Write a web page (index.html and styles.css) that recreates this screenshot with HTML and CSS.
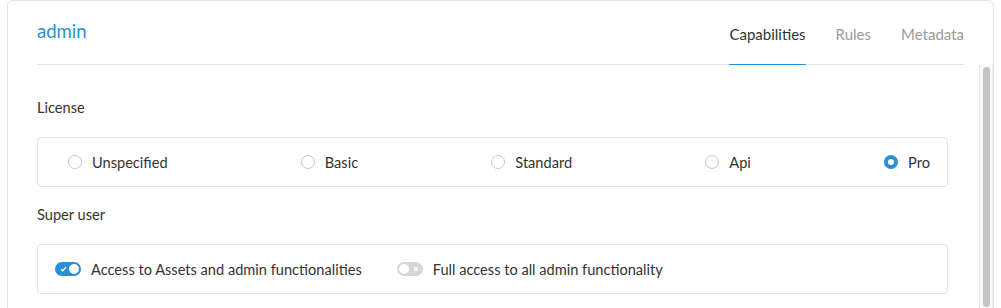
FILE: index.html
```html
<!DOCTYPE html>
<html lang="en">
<head>
    <meta charset="UTF-8">
    <title>admin</title>
    <link rel="stylesheet" href="styles.css">
</head>
<body>

    <div class="card">
        <!-- Header with tabs -->
        <div class="card-header">
            <div class="title">admin</div>
            <div class="tabs">
                <span class="tab active">Capabilities</span>
                <span class="tab">Rules</span>
                <span class="tab">Metadata</span>
            </div>
        </div>

        <div class="card-main">
            <div class="card-body">
                <div class="section-label">License</div>
                <div class="option-box radios">
                    <label class="radio"><span class="dot"></span>Unspecified</label>
                    <label class="radio"><span class="dot"></span>Basic</label>
                    <label class="radio"><span class="dot"></span>Standard</label>
                    <label class="radio"><span class="dot"></span>Api</label>
                    <label class="radio"><span class="dot checked"></span>Pro</label>
                </div>

                <div class="section-label">Super user</div>
                <div class="option-box toggles">
                    <label class="toggle-row">
                        <span class="toggle on">
                            <svg class="mark" width="7" height="6" viewBox="0 0 7 6"><path d="M1 3.2 L2.8 4.8 L6 1.2" fill="none" stroke="#fff" stroke-width="1.2"/></svg>
                            <span class="knob"></span>
                        </span>
                        Access to Assets and admin functionalities
                    </label>
                    <label class="toggle-row">
                        <span class="toggle">
                            <span class="knob"></span>
                            <svg class="mark" width="6" height="6" viewBox="0 0 6 6"><path d="M1 1 L5 5 M5 1 L1 5" fill="none" stroke="#fff" stroke-width="1.1"/></svg>
                        </span>
                        Full access to all admin functionality
                    </label>
                </div>
            </div>

            <!-- scrollbar of the body panel -->
            <div class="scrollbar"><div class="thumb"></div></div>
        </div>
    </div>

</body>
</html>
```

FILE: styles.css
```css
* {
    margin: 0;
    padding: 0;
    box-sizing: border-box;
}

html, body {
    height: 100%;
    overflow: hidden;
}

body {
    font-family: 'Lato', 'Noto Sans', sans-serif;
    font-size: 14.6px;
    color: #333;
    background: #fff;
    padding: 0 7px;
}

/* Card */
.card {
    height: 360px;
    border: 1px solid #e4e4e4;
    border-radius: 6px;
    display: flex;
    flex-direction: column;
}

.card-header {
    height: 64px;
    margin: 0 29px 0 29px;
    border-bottom: 1px solid #e3e3e3;
    display: flex;
    justify-content: space-between;
    align-items: stretch;
}

.title {
    font-size: 18.5px;
    color: #2b8fd6;
    padding-top: 19px;
}

.tabs {
    display: flex;
    gap: 30px;
}

.tab {
    font-size: 15px;
    color: #9a9a9a;
    padding-top: 24px;
    margin-bottom: -1px;
    border-bottom: 1px solid transparent;
}

.tab.active {
    color: #333;
    border-bottom-color: #2b8fd6;
}

/* Body + scrollbar */
.card-main {
    flex: 1;
    display: flex;
    overflow: hidden;
}

.card-body {
    flex: 1;
    padding: 33px 31px 0 29px;
}

.scrollbar {
    width: 14px;
    background: #f9f9f9;
    border-left: 1px solid #e6e6e6;
    border-right: 1px solid #ececec;
    padding: 2px 2px 0 3px;
}

.thumb {
    height: 240px;
    background: #c3c3c3;
    border-radius: 5px;
}

.section-label {
    line-height: 20px;
    margin-bottom: 19px;
}

.option-box {
    border: 1px solid #e5e5e5;
    border-radius: 4px;
    height: 50px;
    margin-bottom: 18px;
    display: flex;
    align-items: center;
}

/* Radios */
.radios {
    justify-content: space-between;
    padding: 0 17px 0 30px;
}

.radio {
    display: flex;
    align-items: center;
    gap: 10px;
}

.dot {
    width: 14px;
    height: 14px;
    border: 1px solid #c6c6c6;
    border-radius: 50%;
    background: #fff;
}

.dot.checked {
    border: 4px solid #2b8fd6;
}

/* Toggles */
.toggles {
    padding: 0 17px;
    gap: 35px;
}

.toggle-row {
    display: flex;
    align-items: center;
    gap: 10px;
}

.toggle {
    width: 26px;
    height: 14px;
    border-radius: 7px;
    background: #d6d6d6;
    display: flex;
    align-items: center;
    justify-content: space-between;
    padding: 0 2px 0 2px;
}

.toggle.on {
    background: #2b8fd6;
    padding-left: 5px;
}

.knob {
    width: 10px;
    height: 10px;
    border-radius: 50%;
    background: #fff;
}

.toggle .mark {
    margin-right: 2px;
}

.toggle.on .mark {
    margin-right: 0;
}
```
